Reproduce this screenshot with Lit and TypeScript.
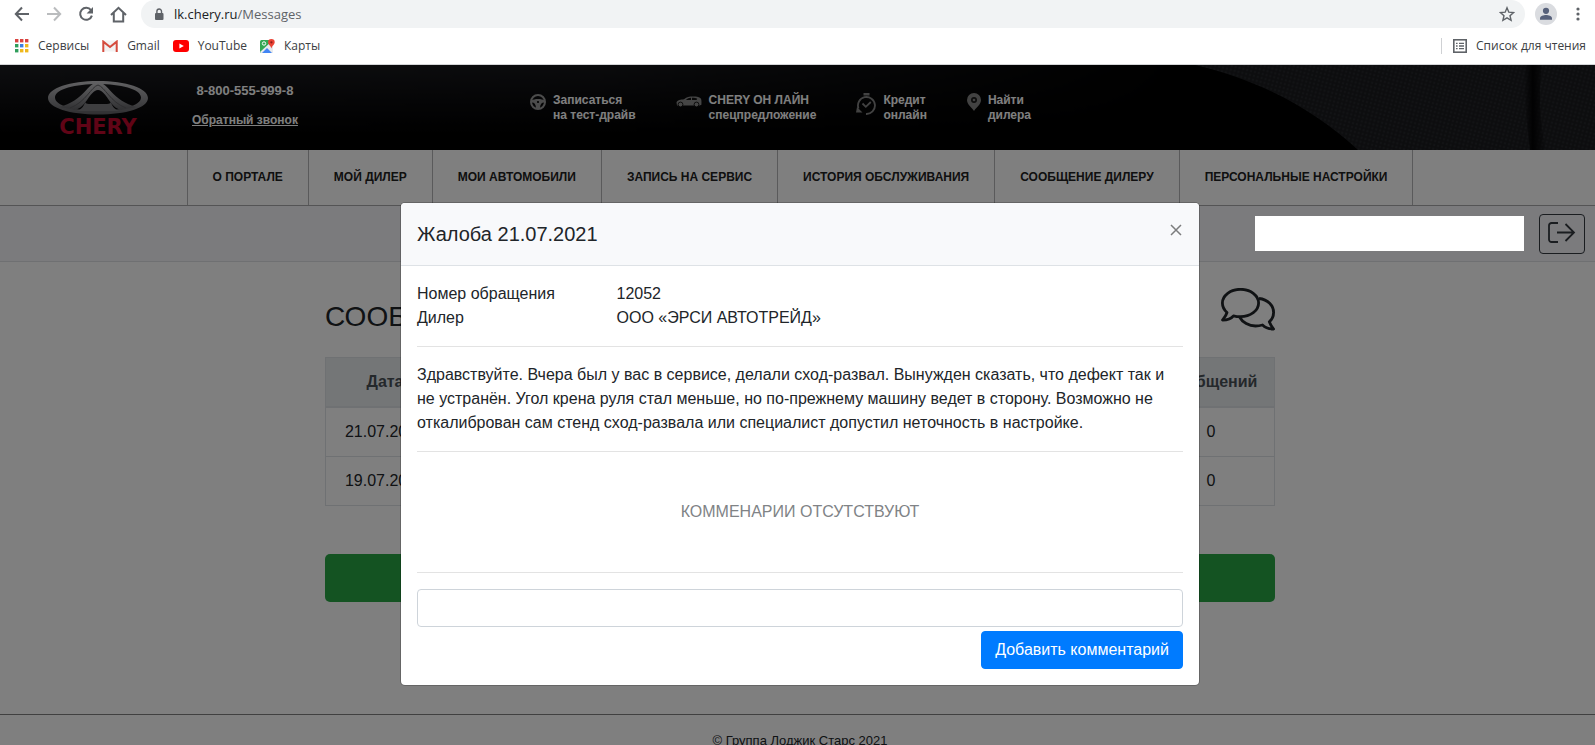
import { LitElement, html, css, svg } from "lit";
import { customElement } from "lit/decorators.js";

const base = css`
  * { box-sizing: border-box; }
  a { color: inherit; text-decoration: none; }
  button { font: inherit; color: inherit; cursor: pointer; }
  svg { display: block; flex: none; }
`;

@customElement("browser-bar")
class BrowserBar extends LitElement {
  static styles = [base, css`
    :host {
      display: block;
      background: #fff;
      border-bottom: 1px solid #d4d5d7;
      font-family: "Open Sans", "Noto Sans", sans-serif;
      color: #3c4043;
    }
    .row { display: flex; align-items: center; }
    .tools { height: 28px; padding: 0 14px; }
    .icon { padding: 0; border: 0; background: none; display: grid; place-items: center; margin-right: 16px; }
    .omnibox {
      flex: 1;
      display: flex;
      align-items: center;
      height: 28px;
      margin: 0 10px 0 -2px;
      padding: 0 10px 0 13px;
      border-radius: 14px;
      background: #f1f3f4;
    }
    .address {
      flex: 1;
      min-width: 0;
      margin-left: 10px;
      font-size: 13px;
      line-height: 20px;
      color: #5f6368;
    }
    .address b { font-weight: 400; color: #202124; }
    .end { margin: 0; }
    .avatar { margin-right: 18px; }
    .marks { height: 36px; padding: 0 9px 0 15px; font-size: 12px; }
    .mark { display: flex; align-items: center; gap: 9px; margin-right: 13px; }
    .reading { margin: 0 0 0 auto; padding-left: 11px; border-left: 1px solid #cfd1d4; height: 16px; }
  `];

  render() {
    const cells = ["#d9433f", "#d9433f", "#d9433f", "#2f9e5b", "#3d7fe0", "#efb81c", "#2f9e5b", "#efb81c", "#efb81c"];
    return html`
      <div class="row tools">
        <button class="icon" aria-label="Назад"><svg width="16" height="16" viewBox="0 0 16 16" fill="none" stroke="#5f6368" stroke-width="2"><path d="M15 8H2M8 1.5 1.8 8 8 14.5"/></svg></button>
        <button class="icon" aria-label="Вперёд"><svg width="16" height="16" viewBox="0 0 16 16" fill="none" stroke="#babcbe" stroke-width="2"><path d="M1 8h13M8 1.5 14.2 8 8 14.5"/></svg></button>
        <button class="icon" aria-label="Обновить"><svg width="16" height="16" viewBox="0 0 16 16"><path d="M13 4.2A6 6 0 1 0 13.9 9.6" fill="none" stroke="#5f6368" stroke-width="2"/><path d="M15 1v6.4H8.6Z" fill="#5f6368"/></svg></button>
        <button class="icon" aria-label="Домой"><svg width="17" height="17" viewBox="0 0 17 17" fill="none" stroke="#5f6368" stroke-width="2"><path d="M1 9 8.5 1.8 16 9M3.8 7v8.6h9.4V7"/></svg></button>
        <div class="omnibox">
          <svg width="10" height="13" viewBox="0 0 10 13"><rect x="1" y="5" width="8.5" height="7" rx="1" fill="#5f6368"/><path d="M2.9 5.5V3.3a2.3 2.3 0 0 1 4.6 0v2.2" fill="none" stroke="#5f6368" stroke-width="1.4"/></svg>
          <div class="address"><b>lk.chery.ru</b>/Messages</div>
          <button class="icon end" aria-label="В закладки"><svg width="16" height="16" viewBox="0 0 16 16"><path d="m8 1.8 1.8 4.4 4.8.4-3.6 3.1 1.1 4.7L8 11.9l-4.1 2.5L5 9.7 1.4 6.6l4.8-.4Z" fill="none" stroke="#5f6368" stroke-width="1.4"/></svg></button>
        </div>
        <button class="icon avatar" aria-label="Профиль"><svg width="22" height="22" viewBox="0 0 22 22"><circle cx="11" cy="11" r="11" fill="#dadce0"/><circle cx="11" cy="7.8" r="3.1" fill="#56607a"/><path d="M5 16.7v-1.4c0-2.2 3.6-3.3 6-3.3s6 1.1 6 3.3v1.4Z" fill="#56607a"/></svg></button>
        <button class="icon end" aria-label="Меню"><svg width="6" height="16" viewBox="0 0 6 16" fill="#5f6368"><circle cx="3" cy="3" r="1.6"/><circle cx="3" cy="8" r="1.6"/><circle cx="3" cy="13" r="1.6"/></svg></button>
      </div>
      <nav class="row marks" aria-label="Закладки">
        <a class="mark" href="#"><svg width="14" height="14" viewBox="0 0 14 14">${cells.map((c, i) => svg`<rect x=${(i % 3) * 5} y=${Math.floor(i / 3) * 5} width="3.4" height="3.4" fill=${c} />`)}</svg>Сервисы</a>
        <a class="mark" href="#"><svg width="16" height="12" viewBox="0 0 16 12"><rect x=".5" y=".5" width="15" height="11" fill="#f2f2f2"/><path d="M1.3 12V1.6L8 7l6.7-5.4V12" fill="none" stroke="#d54b3d" stroke-width="2"/></svg>Gmail</a>
        <a class="mark" href="#"><svg width="16" height="12" viewBox="0 0 16 12"><rect width="16" height="12" rx="3" fill="#f00"/><path d="M6.4 3.4v5.2L10.8 6Z" fill="#fff"/></svg>YouTube</a>
        <a class="mark" href="#"><svg width="15" height="15" viewBox="0 0 15 15"><rect y="1" width="13" height="13" rx="1.5" fill="#34a853"/><path d="M0 13 12 2h1v12H1Z" fill="#e8eaed"/><path d="m2 14 5-5 5 5Z" fill="#4285f4"/><circle cx="4" cy="4.5" r="1.7" fill="none" stroke="#fff"/><path d="M11.4 0a3.3 3.3 0 0 1 3.3 3.3c0 2.4-2.6 3.2-3.3 6.2-.7-3-3.3-3.8-3.3-6.2A3.3 3.3 0 0 1 11.4 0Z" fill="#ea4335"/><circle cx="11.4" cy="3.3" r="1.1" fill="#8c1d18"/></svg>Карты</a>
        <a class="mark reading" href="#"><svg width="14" height="14" viewBox="0 0 14 14"><rect x=".8" y=".8" width="12.4" height="12.4" fill="none" stroke="#5f6368" stroke-width="1.6"/><path d="M3 4.3h1.6M3 7h1.6M3 9.7h1.6M6 4.3h5M6 7h5M6 9.7h5" stroke="#5f6368" stroke-width="1.3"/></svg>Список для чтения</a>
      </nav>`;
  }
}

@customElement("site-header")
class SiteHeader extends LitElement {
  static styles = [base, css`
    :host { display: block; }
    .hero {
      position: relative;
      display: flex;
      align-items: flex-start;
      height: 85px;
      padding: 0 48px;
      overflow: hidden;
      background: #000;
      color: #fff;
      font-size: 12px;
      line-height: 15px;
      font-weight: 700;
    }
    .photo { position: absolute; inset: 0; width: 100%; height: 100%; }
    .hero > a, .hero > div { position: relative; }
    .logo { width: 100px; padding-top: 15px; }
    .brand {
      display: block;
      text-align: center;
      font: 700 21px/24px "DejaVu Sans", sans-serif;
      color: #c0082c;
    }
    .contact { width: 105px; margin-left: 44px; padding-top: 18px; display: grid; justify-items: center; gap: 15px; white-space: nowrap; }
    .phone { font-size: 13px; }
    .call { text-decoration: underline; }
    .services { display: flex; gap: 40px; margin-left: 233px; padding-top: 27px; }
    .service { display: flex; gap: 7px; white-space: nowrap; }
    .service span { padding-top: 1px; }
    nav { display: flex; justify-content: center; padding-left: 5px; border-bottom: 1px solid #a9a9ab; background: #fff; }
    .tab {
      padding: 0 25px;
      border-right: 1px solid #b5b5b7;
      font-size: 12px;
      line-height: 55px;
      font-weight: 700;
      color: #212121;
      white-space: nowrap;
    }
    .tab:first-child { border-left: 1px solid #b5b5b7; }
  `];

  render() {
    const tabs = ["О ПОРТАЛЕ", "МОЙ ДИЛЕР", "МОИ АВТОМОБИЛИ", "ЗАПИСЬ НА СЕРВИС", "ИСТОРИЯ ОБСЛУЖИВАНИЯ", "СООБЩЕНИЕ ДИЛЕРУ", "ПЕРСОНАЛЬНЫЕ НАСТРОЙКИ"];
    return html`
      <header class="hero">
        <svg class="photo" viewBox="0 0 1595 85" preserveAspectRatio="none">
          <defs>
            <linearGradient id="fade" x1="0" y1="0" x2="0" y2="1"><stop offset="0" stop-color="#1b1c20"/><stop offset=".6" stop-color="#0a0a0c"/><stop offset="1" stop-color="#000"/></linearGradient>
            <linearGradient id="side" x1="0" y1="0" x2="1" y2="0"><stop offset="0" stop-color="#fff"/><stop offset=".5" stop-color="#fff" stop-opacity=".8"/><stop offset="1" stop-color="#fff" stop-opacity="0"/></linearGradient>
            <linearGradient id="seam" x1="0" y1="0" x2="1" y2="0"><stop offset="0" stop-color="#040405" stop-opacity="0"/><stop offset=".4" stop-color="#040405"/><stop offset="1" stop-color="#040405" stop-opacity="0"/></linearGradient>
            <mask id="m"><rect width="1200" height="70" fill="url(#side)"/></mask>
            <pattern id="mesh" width="4" height="4" patternUnits="userSpaceOnUse" patternTransform="rotate(15)"><rect width="4" height="4" fill="#1a1b1e"/><circle cx="2" cy="2" r="1.2" fill="#25262a"/></pattern>
          </defs>
          <rect width="1200" height="70" fill="url(#fade)" mask="url(#m)"/>
          <path d="M1195 0C1260 15 1315 45 1358 85H1595V0Z" fill="url(#mesh)"/>
          <path d="M1524 0C1524 30 1527 60 1530 85H1546C1540 60 1538 30 1542 0Z" fill="url(#seam)"/>
        </svg>
        <a class="logo" href="#" aria-label="Chery">
          <svg width="100" height="35" viewBox="0 0 100 35">
            <defs><linearGradient id="steel" x1="0" y1="0" x2="0" y2="1"><stop offset="0" stop-color="#c4c4c7"/><stop offset=".55" stop-color="#8e8e92"/><stop offset="1" stop-color="#606064"/></linearGradient></defs>
            <path fill-rule="evenodd" d="M50 1C78 1 100 8 100 18S78 34.500 50 34.500 0 28 0 18 22 1 50 1ZM50 4C28 4 7 9 7 17.500S26 30.500 50 30.500 93 26 93 17.500 72 4 50 4Z" fill="url(#steel)"/>
            <path d="M50 2C39 3 36 21 11 27L27 30C39 27 41 11 50 10c9 1 11 17 23 20l16-3C64 21 61 3 50 2Z" fill="url(#steel)"/>
            <path d="M50 5C43 7 38 22 22 28M50 5c7 2 12 17 28 23" fill="none" stroke="#5c5c60" stroke-width="1"/>
            <path d="M29 31C34 29 36 26 37 22c1 2 3 2 6 2h14c3 0 5 0 6-2 1 4 3 7 8 9Z" fill="#7c7c80"/>
          </svg>
          <span class="brand">CHERY</span>
        </a>
        <div class="contact"><a class="phone" href="tel:88005559998">8-800-555-999-8</a><a class="call" href="#">Обратный звонок</a></div>
        <div class="services">
          <a class="service" href="#"><svg width="16" height="18" viewBox="0 0 16 18"><circle cx="8" cy="10" r="7" fill="none" stroke="#999" stroke-width="2"/><path d="M1.500 8.500C4 6.500 12 6.500 14.500 8.500l-.3 2c-2.600 0-4 1.800-4.200 5.500H6c-.2-3.700-1.600-5.500-4.200-5.500Z" fill="#999"/><circle cx="8" cy="10" r="1.100" fill="#000"/></svg><span>Записаться<br>на тест-драйв</span></a>
          <a class="service" href="#"><svg width="26" height="18" viewBox="0 0 26 18"><path d="M.5 10.500C1 8 5 7.600 8 7.200 11 5 13 4.500 17 4.500c4 0 7 .5 8 2.200.6 1.500.6 4 .4 6l-1.800.8H1Z" fill="#8a8a8a"/><path d="M9.800 8c2-1.800 3-2.200 5.200-2.300V8Zm6.200-2.300c2.500 0 4 .2 5.200 1L20.500 8H16Z" fill="#111"/><circle cx="4.500" cy="12.500" r="2.400" fill="#8a8a8a" stroke="#000" stroke-width=".8"/><circle cx="20.500" cy="12.500" r="2.400" fill="#8a8a8a" stroke="#000" stroke-width=".8"/></svg><span>CHERY ОН ЛАЙН<br>спецпредложение</span></a>
          <a class="service" href="#"><svg width="20" height="24" viewBox="0 0 20 24"><path d="M2.500 16.500A8.500 8.500 0 1 1 10 22" fill="none" stroke="#858585" stroke-width="1.800"/><path d="M6.500 11.500 9.800 14.800 14.800 10" fill="none" stroke="#858585" stroke-width="1.800"/><path d="M7.500 1h6v2.500h-6ZM0 20.500l1-5.500 5.500 5.500Z" fill="#858585"/></svg><span>Кредит<br>онлайн</span></a>
          <a class="service" href="#"><svg width="14" height="20" viewBox="0 0 14 20"><path d="M7 1a7 7 0 0 1 7 7c0 4.500-4.500 7-7 11-2.500-4-7-6.500-7-11a7 7 0 0 1 7-7Z" fill="#858585"/><circle cx="7" cy="8" r="3" fill="#1a1a1a"/><circle cx="7" cy="8" r="1.300" fill="#858585"/></svg><span>Найти<br>дилера</span></a>
        </div>
      </header>
      <nav aria-label="Разделы">${tabs.map((t) => html`<a class="tab" href="#">${t}</a>`)}</nav>`;
  }
}

@customElement("message-dialog")
class MessageDialog extends LitElement {
  static styles = [base, css`
    :host { display: block; width: 800px; max-width: 100%; }
    .card { border: 1px solid rgba(0, 0, 0, 0.2); border-radius: 5px; background: #fff; background-clip: padding-box; overflow: hidden; }
    .head { display: flex; justify-content: space-between; align-items: flex-start; padding: 16px; background: #f8f9fb; border-bottom: 1px solid #dee2e6; }
    h5 { margin: 0; font-size: 20px; line-height: 30px; font-weight: 400; }
    .close { margin: 4px 0 0; padding: 1px; border: 0; background: none; }
    .body { padding: 16px; }
    .facts { display: grid; grid-template-columns: calc(25% + 8px) 1fr; margin: 0; }
    dd, p { margin: 0; }
    hr { margin: 16px 0; border: 0; border-top: 1px solid #e3e3e3; }
    .empty { padding: 32px 0; text-align: center; color: #808386; }
    .comment { display: block; width: 100%; height: 38px; padding: 6px 12px; border: 1px solid #ced4da; border-radius: 4px; font: inherit; }
    .actions { display: flex; justify-content: flex-end; margin-top: 4px; }
    .add { padding: 6px 13px; border: 1px solid #007bff; border-radius: 4px; background: #007bff; color: #fff; }
  `];

  render() {
    return html`
      <section class="card" role="dialog" aria-labelledby="title">
        <div class="head">
          <h5 id="title">Жалоба 21.07.2021</h5>
          <button class="close" aria-label="Закрыть"><svg width="12" height="12" viewBox="0 0 12 12" stroke="#7c7d7e" stroke-width="1.500"><path d="m1 1 10 10M11 1 1 11"/></svg></button>
        </div>
        <div class="body">
          <dl class="facts"><dt>Номер обращения</dt><dd>12052</dd><dt>Дилер</dt><dd>ООО «ЭРСИ АВТОТРЕЙД»</dd></dl>
          <hr>
          <p>Здравствуйте. Вчера был у вас в сервисе, делали сход-развал. Вынужден сказать, что дефект так и не устранён. Угол крена руля стал меньше, но по-прежнему машину ведет в сторону. Возможно не откалиброван сам стенд сход-развала или специалист допустил неточность в настройке.</p>
          <hr>
          <p class="empty">КОММЕНАРИИ ОТСУТСТВУЮТ</p>
          <hr>
          <input class="comment" type="text" aria-label="Комментарий">
          <div class="actions"><button class="add">Добавить комментарий</button></div>
        </div>
      </section>`;
  }
}

@customElement("app-root")
class AppRoot extends LitElement {
  static styles = [base, css`
    :host {
      display: flex;
      flex-direction: column;
      height: 100vh;
      overflow: hidden;
      font: 400 16px/24px "Liberation Sans", Arial, sans-serif;
      color: #212529;
    }
    .view { position: relative; flex: 1; min-height: 0; overflow: hidden; background: #fff; }
    .shade { position: absolute; inset: 0; z-index: 1; background: rgba(0, 0, 0, 0.5); }
    .layer { position: absolute; inset: 0; z-index: 3; display: flex; justify-content: center; align-items: flex-start; padding: 137px 0 0 5px; }
    .account { display: flex; justify-content: flex-end; align-items: center; gap: 15px; height: 56px; padding: 0 10px; background: #f6f7fb; border-bottom: 1px solid #dfe0e4; }
    .user { position: relative; z-index: 2; width: 269px; height: 35px; background: #fff; }
    .exit { display: grid; place-items: center; width: 46px; height: 40px; padding: 0; border: 1px solid #343a40; border-radius: 4px; background: none; }
    main { width: 955px; max-width: 100%; margin: 0 auto; padding-left: 5px; }
    .title { display: flex; justify-content: space-between; align-items: center; height: 95px; }
    h3 { margin: 14px 0 0; font-size: 28px; line-height: 34px; font-weight: 400; }
    table { width: 100%; border-collapse: collapse; table-layout: fixed; }
    th, td { height: 49px; padding: 12px; border: 1px solid #dee2e6; text-align: center; }
    th { background: #e9ecef; border-bottom-width: 2px; color: #495057; font-weight: 700; }
    .date { width: 119px; }
    .count { width: 127px; }
    .new { display: block; width: 100%; height: 48px; margin-top: 48px; border: 0; border-radius: 5px; background: #28a745; color: #fff; font-size: 20px; }
    footer { margin-top: 112px; padding: 14px 0 14px 5px; border-top: 1px solid #808080; text-align: center; font-size: 13px; }
  `];

  render() {
    return html`
      <browser-bar></browser-bar>
      <div class="view">
        <site-header></site-header>
        <div class="account">
          <div class="user"></div>
          <button class="exit" aria-label="Выход"><svg width="30" height="24" viewBox="1 1 30 24" fill="none" stroke="#343a40" stroke-width="1.800"><path d="M12 2H5.500A2.500 2.500 0 0 0 3 4.500v14A2.500 2.500 0 0 0 5.500 21H12M11 11.500h17M19.500 3l8.500 8.500-8.500 8.500"/></svg></button>
        </div>
        <main>
          <div class="title">
            <h3>СООБЩЕНИЯ</h3>
            <svg width="54" height="43" viewBox="0 0 54 43" fill="none" stroke="#212529" stroke-width="2.800" stroke-linejoin="round"><path d="M6 24.500C5 28 3 30 1.500 32 6 32 10 31 12.500 27.800c2.100.6 4.500.9 7 .9 10 0 18.100-6.100 18.100-13.700S29.500 1.300 19.500 1.300 1.400 7.500 1.400 15c0 3.700 1.800 7 4.600 9.500Z"/><path d="M38 10.500c9 1 14.600 7 14.600 14 0 4-1.600 7-4.300 9.300 1.200 3.200 2.700 5.200 4.300 7.200-4.600 0-8.100-1-11.100-4-2 .6-4.500 1-7 1-6.500 0-13-3.500-16-9"/></svg>
          </div>
          <table>
            <thead><tr><th class="date">Дата</th><th>Тема</th><th class="count">Сообщений</th></tr></thead>
            <tbody>
              <tr><td>21.07.2021</td><td></td><td>0</td></tr>
              <tr><td>19.07.2021</td><td></td><td>0</td></tr>
            </tbody>
          </table>
          <button class="new" aria-label="Новое сообщение"></button>
        </main>
        <footer>© Группа Лоджик Старс 2021</footer>
        <div class="shade"></div>
        <div class="layer"><message-dialog></message-dialog></div>
      </div>`;
  }
}
